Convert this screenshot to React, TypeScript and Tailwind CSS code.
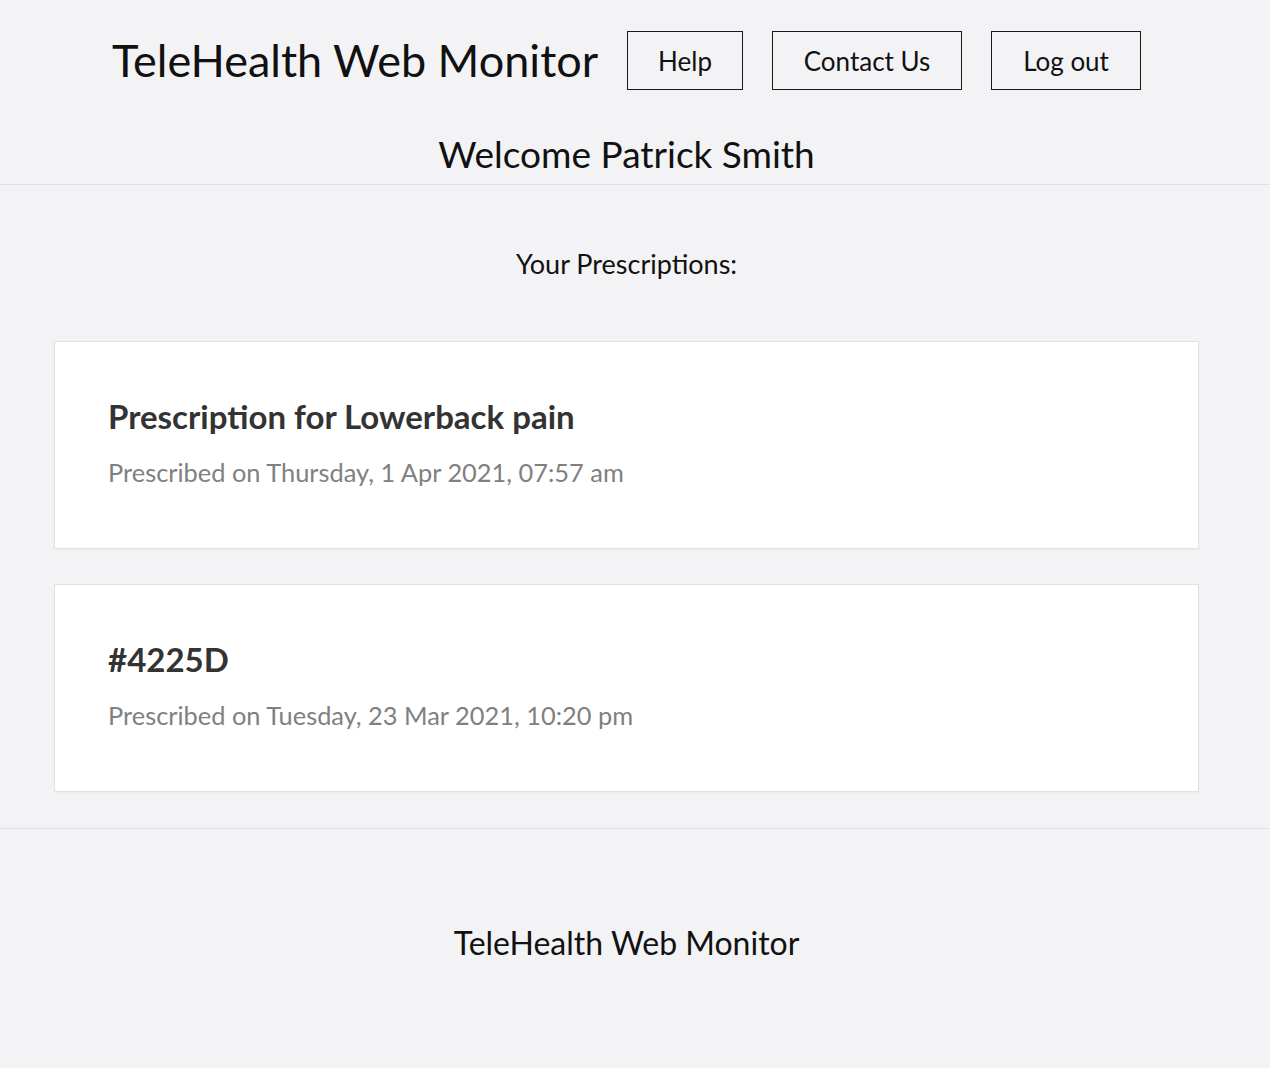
const prescriptions = [
    { id: 1, title: "Prescription for Lowerback pain", date: "Thursday, 1 Apr 2021, 07:57 am" },
    { id: 2, title: "#4225D", date: "Tuesday, 23 Mar 2021, 10:20 pm" },
];

function NavButton({ label, width }: { label: string; width: string }) {
    return (
        <button
            type="button"
            className={`h-[59px] ${width} border border-[#1a1a1a] bg-transparent text-[26px] leading-none text-[#111]`}
        >
            {label}
        </button>
    );
}

export default function App() {
    return (
        <div className="min-h-[1068px] bg-[#f3f3f5] font-['Lato',sans-serif] text-[#111]">
            <header className="border-b border-[#e0e0e3]">
                <div className="w-[1253px] pt-[31px] pb-[8px]">
                    <div className="flex items-center justify-center gap-[29px]">
                        <h1 className="text-[45px] leading-none font-normal text-[#111]">
                            TeleHealth Web Monitor
                        </h1>
                        <NavButton label="Help" width="w-[116px]" />
                        <NavButton label="Contact Us" width="w-[190px]" />
                        <NavButton label="Log out" width="w-[150px]" />
                    </div>
                    <h2 className="mt-[42px] text-center text-[37px] leading-[44px]">
                        Welcome Patrick Smith
                    </h2>
                </div>
            </header>

            <main className="border-b border-[#e0e0e3]">
                <div className="w-[1253px] pb-[36px]">
                    <p className="pt-[63px] pb-[61px] text-center text-[27px] leading-[32px]">
                        Your Prescriptions:
                    </p>

                    <div className="flex flex-col gap-[35px] px-[54px]">
                        {prescriptions.map((item) => (
                            <div
                                key={item.id}
                                className="h-[208px] border border-[#e2e2e4] bg-white px-[53px] pt-[56px] shadow-[0_1px_2px_rgba(0,0,0,0.04)]"
                            >
                                <h3 className="text-[33px] leading-[36px] font-bold text-[#333]">
                                    {item.title}
                                </h3>
                                <p className="mt-[23px] text-[25.4px] leading-[30px] text-[#808080]">
                                    Prescribed on {item.date}
                                </p>
                            </div>
                        ))}
                    </div>
                </div>
            </main>

            <footer className="w-[1253px] pt-[94px] text-center text-[32px] leading-[40px]">
                TeleHealth Web Monitor
            </footer>
        </div>
    );
}
